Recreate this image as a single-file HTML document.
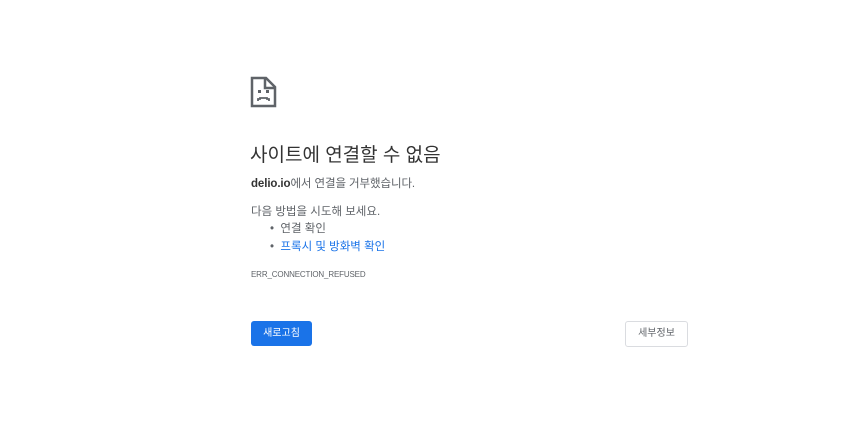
<!DOCTYPE html>
<html><head><meta charset="utf-8"><style>
body{margin:0;width:860px;height:429px;background:#fff;font-family:"Liberation Sans","Noto Sans CJK KR",sans-serif;color:#202124;position:relative;overflow:hidden}
.a{position:absolute;white-space:nowrap}
</style></head><body>
<svg class="a" style="left:250px;top:76px" width="28" height="32" viewBox="0 0 28 32">
<path d="M2 2H16L25 11V30H2Z" fill="none" stroke="#5f6368" stroke-width="2.5" stroke-linejoin="miter"/>
<path d="M15 2V12H25" fill="none" stroke="#5f6368" stroke-width="2.5"/>
<rect x="8" y="14" width="3" height="3" fill="#5f6368"/>
<rect x="16" y="14" width="3" height="3" fill="#5f6368"/>
<path d="M8 25V23H10V22H17V23H19V25" fill="none" stroke="#5f6368" stroke-width="1.8"/>
</svg>
<div class="a" style="left:250px;top:140px;font-size:19px;color:#333">사이트에 연결할 수 없음</div>
<div class="a" style="left:251px;top:175px;font-size:11.5px;color:#5f6368;letter-spacing:-0.1px"><b style="color:#333">delio.io</b>에서 연결을 거부했습니다.</div>
<div class="a" style="left:251px;top:203px;font-size:11.5px;color:#5f6368">다음 방법을 시도해 보세요.</div>
<div class="a" style="left:270px;top:220px;font-size:11.5px;color:#5f6368">•&nbsp;&nbsp;연결 확인</div>
<div class="a" style="left:270px;top:238px;font-size:11.5px;color:#5f6368">•&nbsp;&nbsp;<span style="color:#1a73e8">프록시 및 방화벽 확인</span></div>
<div class="a" style="left:251px;top:270px;font-size:8px;color:#5f6368;letter-spacing:-0.15px">ERR_CONNECTION_REFUSED</div>
<div class="a" style="left:251px;top:321px;width:61px;height:25px;background:#1a73e8;border-radius:3px;color:#fff;font-size:10px;line-height:25px;text-align:center">새로고침</div>
<div class="a" style="left:625px;top:321px;border:1px solid #dadce0;border-radius:3px;color:#5f6368;font-size:10px;line-height:24px;text-align:center;box-sizing:border-box;width:63px;height:26px">세부정보</div>
</body></html>
